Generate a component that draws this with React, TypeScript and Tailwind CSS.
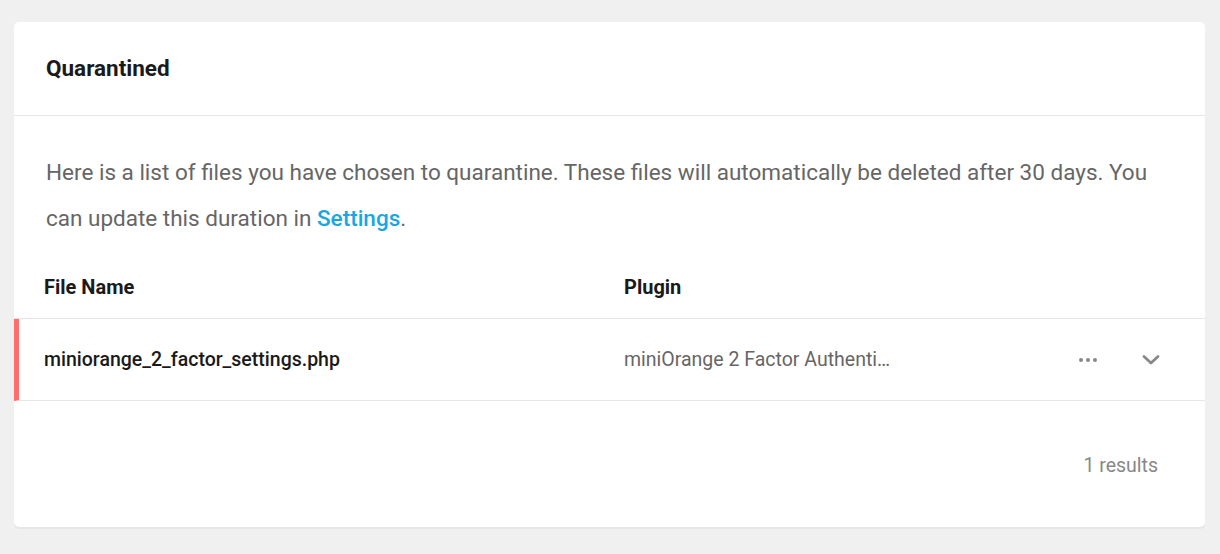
import React from "react";

function Dots() {
  return (
    <svg width="20" height="6" viewBox="0 0 20 6" className="fill-[#888]">
      <circle cx="3" cy="3" r="2" />
      <circle cx="10" cy="3" r="2" />
      <circle cx="17" cy="3" r="2" />
    </svg>
  );
}

function Chevron() {
  return (
    <svg width="18" height="11" viewBox="0 0 18 11" fill="none" className="stroke-[#888]">
      <path d="M2 2.5l7 6.5 7-6.5" strokeWidth="2.8" strokeLinecap="round" strokeLinejoin="round" />
    </svg>
  );
}

export default function App() {
  return (
    <div className="min-h-[554px] bg-[#f0f0f0] pt-[22px] pl-[14px] pr-[15px] pb-[25px] font-['Roboto',sans-serif]">
      <div className="overflow-hidden rounded-[5px] bg-white shadow-[0_2px_0_#e6e6e6]">
        <div className="flex h-[94px] items-center border-b border-[#e6e6e6] px-[32px]">
          <h2 className="text-[22.5px] font-bold text-[#1a1a1a]">Quarantined</h2>
        </div>

        <div className="px-[32px] pt-[33px]">
          <p className="text-[22.5px] leading-[46px] text-[#666]">
            Here is a list of files you have chosen to quarantine. These files will automatically be deleted after 30
            days. You can update this duration in{" "}
            <a className="font-medium text-[#17a8e3]">Settings</a>.
          </p>
        </div>

        <div className="mt-[18px]">
          <div className="flex h-[60px] items-center border-b border-[#e6e6e6] pb-[3px] pl-[30px] text-[20px] font-bold text-[#1a1a1a]">
            <div className="w-[580px]">File Name</div>
            <div>Plugin</div>
          </div>
          <div className="flex h-[82px] items-center border-b border-[#e6e6e6] border-l-[5px] border-l-[#ff6d6d] pl-[25px] text-[19.5px]">
            <div className="w-[580px] font-medium text-[#1a1a1a]">miniorange_2_factor_settings.php</div>
            <div className="w-[268px] truncate text-[#666]">miniOrange 2 Factor Authentication</div>
            <div className="ml-auto flex items-center pr-[34px]">
              <span className="flex w-[40px] justify-center">
                <Dots />
              </span>
              <span className="ml-[23px] flex w-[40px] justify-center">
                <Chevron />
              </span>
            </div>
          </div>
        </div>

        <div className="flex h-[126px] items-center justify-end pr-[47px] pt-[4px] text-[19.5px] text-[#888]">
          1 results
        </div>
      </div>
    </div>
  );
}
